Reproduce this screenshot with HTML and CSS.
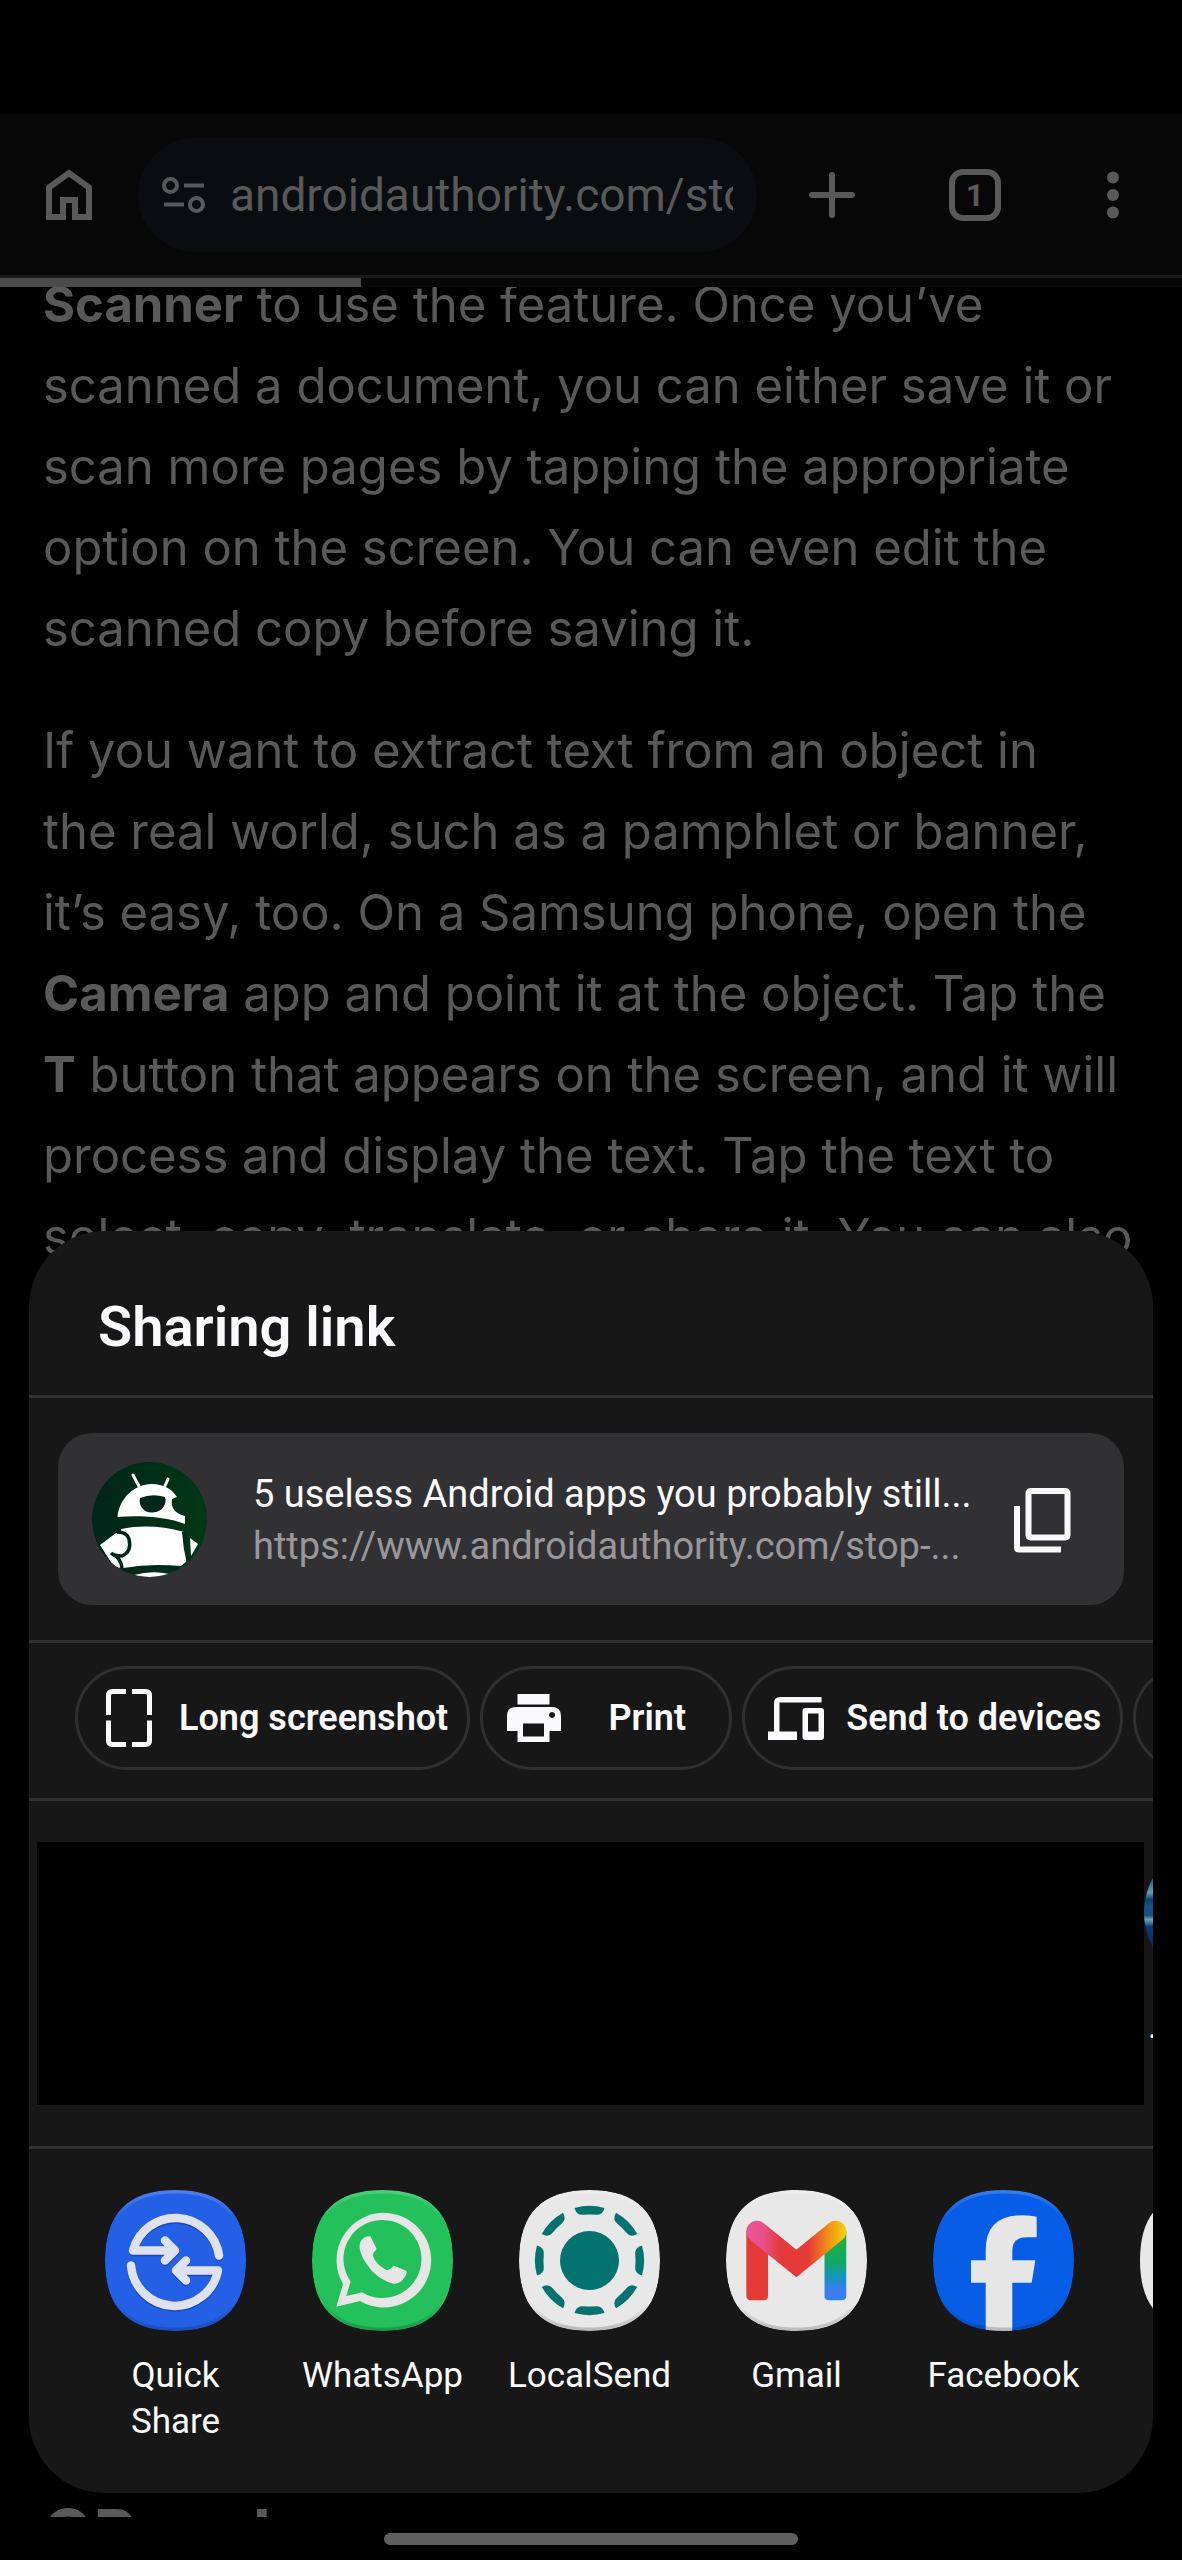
FILE: index.html
```
<!DOCTYPE html>
<html lang="en">
<head>
    <meta charset="UTF-8">
    <meta name="viewport" content="width=device-width, initial-scale=1.0">
    <title>Sharing link</title>
    <link rel="stylesheet" href="styles.css">
</head>
<body>
    <header class="toolbar">
        <button class="tool" aria-label="Home">
            <svg width="46" height="51" viewBox="0 0 46 51" fill="none" stroke="currentColor" stroke-width="6"><path d="M3 48V18.500L23 4l20 14.500V48H29V31H17V48Z"/></svg>
        </button>
        <div class="url-bar">
            <svg width="44" height="36" viewBox="0 0 44 36" fill="none" stroke="currentColor" stroke-width="4"><circle cx="8.500" cy="8.500" r="6.500"/><path d="M22 8.500h20M2 27.500h20"/><circle cx="34.500" cy="27.500" r="6.500"/></svg>
            <input type="text" class="url" aria-label="Address" value="androidauthority.com/stop">
        </div>
        <button class="tool new-tab" aria-label="New tab">
            <svg width="46" height="46" viewBox="0 0 46 46" stroke="currentColor" stroke-width="6" stroke-linecap="round"><path d="M23 3v40M3 23h40"/></svg>
        </button>
        <button class="tool" aria-label="Tabs"><span class="tab-count">1</span></button>
        <button class="tool" aria-label="Menu">
            <svg width="12" height="48" viewBox="0 0 12 48" fill="currentColor"><circle cx="6" cy="6.500" r="6"/><circle cx="6" cy="24" r="6"/><circle cx="6" cy="41.500" r="6"/></svg>
        </button>
    </header>
    <div class="load-track"><div class="load-bar"></div></div>

    <main class="article">
        <p><b>Scanner</b> to use the feature. Once you’ve scanned a document, you can either save it or scan more pages by tapping the appropriate option on the screen. You can even edit the scanned copy before saving it.</p>
        <p>If you want to extract text from an object in<br>the real world, such as a pamphlet or banner,<br>it’s easy, too. On a Samsung phone, open the <b>Camera</b> app and point it at the object. Tap the <b>T</b> button that appears on the screen, and it will process and display the text. Tap the text to<br>select, copy, translate, or share it. You can also</p>
        <h2>QR code</h2>
    </main>
    <div class="nav-bar"><div class="handle"></div></div>

    <section class="sheet">
        <h1>Sharing link</h1>

        <div class="row link-row">
            <div class="link-card">
                <svg class="avatar" viewBox="0 0 115 115">
                    <defs>
                        <linearGradient id="green"><stop offset="0" stop-color="#00241a"/><stop offset="1" stop-color="#003814"/></linearGradient>
                        <clipPath id="round"><circle cx="57.500" cy="57.500" r="57.500"/></clipPath>
                    </defs>
                    <g clip-path="url(#round)">
                        <rect width="115" height="115" fill="url(#green)"/>
                        <path d="M41 13l7 13M76 17l-4 9" stroke="#fff" stroke-width="3" stroke-linecap="round"/>
                        <path d="M25.500 55C27 37 42 22 60 22c11 0 20 5 25 13l-5 2c-1 7 1 14 13 17v8C76 55 48 53 25.500 55Z" fill="#fff"/>
                        <path d="M48 36q12-5 25-1 2 6-3 12-8 6-17 2-7-6-5-13Z" fill="#00261a"/>
                        <path d="M29 67q30-6 63 3 0 18 4 28l-7 6q-30-3-58 2-6-20-2-39Z" fill="#fff"/>
                        <path d="M98 76l8 6-7 12Z" fill="#fff"/>
                        <path d="M92 70q1 16 5 32" fill="none" stroke="#00301a" stroke-width="4"/>
                        <path d="M8 83l16-12q9 0 12 6 3 9-4 16l-2 13-8-1Z" fill="#fff"/>
                        <path d="M25 70q10 0 12 7 3 13-7 17-8 0-11-3M20 92q9 4 10 14" fill="none" stroke="#00281a" stroke-width="3.500"/>
                        <path d="M30 109q30-6 60-1" fill="none" stroke="#00281a" stroke-width="4"/>
                        <path d="M42 113q18-5 35-1l-8 3H48Z" fill="#fff"/>
                    </g>
                </svg>
                <div class="link-text">
                    <div class="link-title">5 useless Android apps you probably still...</div>
                    <div class="link-url">https://www.androidauthority.com/stop-...</div>
                </div>
                <button class="copy" aria-label="Copy link">
                    <svg width="57" height="65" viewBox="0 0 57 65" fill="none" stroke="currentColor" stroke-width="6"><rect x="14.500" y="3" width="39" height="46.500" rx="2"/><path d="M3 18v41.500q0 2 2 2h42"/></svg>
                </button>
            </div>
        </div>

        <div class="row chips">
            <button class="chip">
                <span class="chip-icon"><svg width="46" height="58" viewBox="0 0 46 58" fill="none" stroke="currentColor" stroke-width="5"><path d="M2.500 26V6.500q0-4 4-4H20M26 2.500h13.500q4 0 4 4V26M43.500 31.500v20q0 4-4 4H26M20 55.500H6.500q-4 0-4-4v-20"/></svg></span>
                <span class="chip-label">Long screenshot</span>
            </button>
            <button class="chip">
                <span class="chip-icon"><svg width="54" height="48" viewBox="0 0 54 48" fill="currentColor" fill-rule="evenodd"><path d="M10.500 0h32v10.500h-32ZM9 13h36q9 0 9 9v15H42.500v11h-32V37H0V22q0-9 9-9ZM16 29.500v13h21v-13ZM45 18a3 3 0 1 0 .1 0Z"/></svg></span>
                <span class="chip-label">Print</span>
            </button>
            <button class="chip">
                <span class="chip-icon"><svg width="56" height="43" viewBox="0 0 56 43" fill="currentColor" fill-rule="evenodd"><path d="M0 34.500h6V6q0-6 6-6h41.500v5.500H11.500v29H29V43H0ZM37.500 11H53q3 0 3 3v26q0 3-3 3H37.500q-3 0-3-3V14q0-3 3-3ZM40 16.500v18h10.500v-18Z"/></svg></span>
                <span class="chip-label">Send to devices</span>
            </button>
            <button class="chip" aria-label="More"><span class="chip-icon"></span></button>
        </div>

        <div class="row contacts">
            <div class="redacted"></div>
            <div class="contact">
                <div class="contact-photo"></div>
                <div class="contact-name">.</div>
            </div>
        </div>

        <div class="apps">
            <!-- shared icon shape and its edge shading -->
            <svg class="defs" width="0" height="0">
                <defs>
                    <path id="tile" d="M70.500 0C118 0 141 23 141 70.500S118 141 70.500 141 0 118 0 70.500 23 0 70.500 0Z"/>
                    <clipPath id="tile-clip"><use href="#tile"/></clipPath>
                    <linearGradient id="edge" x1="0" y1="0" x2="0" y2="1">
                        <stop offset="0" stop-color="#fff" stop-opacity=".2"/>
                        <stop offset=".2" stop-color="#fff" stop-opacity="0"/>
                        <stop offset=".8" stop-color="#000" stop-opacity="0"/>
                        <stop offset="1" stop-color="#000" stop-opacity=".2"/>
                    </linearGradient>
                    <linearGradient id="m-top" gradientUnits="userSpaceOnUse" x1="24" y1="0" x2="118" y2="0">
                        <stop offset="0" stop-color="#e8559a"/>
                        <stop offset=".14" stop-color="#e8508a"/>
                        <stop offset=".32" stop-color="#e53b38"/>
                        <stop offset=".62" stop-color="#e53b38"/>
                        <stop offset=".82" stop-color="#ef8a1c"/>
                        <stop offset="1" stop-color="#f3cd05"/>
                    </linearGradient>
                    <linearGradient id="m-right" x1="0" y1="0" x2="0" y2="1">
                        <stop offset=".2" stop-color="#1cae4c"/>
                        <stop offset=".45" stop-color="#12a867"/>
                        <stop offset=".65" stop-color="#1397b8"/>
                        <stop offset=".85" stop-color="#3a7df0"/>
                    </linearGradient>
                </defs>
            </svg>
            <a class="app" href="#">
                <svg class="app-icon" viewBox="0 0 141 141">
                    <g clip-path="url(#tile-clip)">
                        <use href="#tile" fill="#2460e6"/>
                        <g fill="none" stroke-width="8.500" stroke-linecap="round" stroke-linejoin="round">
                            <path d="M69 62H28A44 44 0 0 1 114 67M60 52l10 10-10 10M72 82h41A44 44 0 0 1 26 77M81 72 71 82l10 10" stroke="#1a49b8"/>
                            <path d="M69 60.500H28A44 44 0 0 1 114 65.500M60 50.500l10 10-10 10M72 80.500h41A44 44 0 0 1 26 75.500M81 70.500l-10 10 10 10" stroke="#dfe1ee"/>
                        </g>
                        <use href="#tile" fill="none" stroke="url(#edge)" stroke-width="7"/>
                    </g>
                </svg>
                <span class="app-name">Quick Share</span>
            </a>
            <a class="app" href="#">
                <svg class="app-icon" viewBox="0 0 141 141">
                    <g clip-path="url(#tile-clip)">
                        <use href="#tile" fill="#23c05c"/>
                        <path fill="#e6e6e6" fill-rule="evenodd" d="M24.300 116.700 31 94A47.300 47.300 0 1 1 48 111ZM34.300 106 50 102.200A39 39 0 1 0 38.600 91.500Z"/>
                        <path fill="#e6e6e6" d="M58.500 46.500 64.700 59q-4 4-4 6.500Q64 75 75 80.300q3.500-.5 6.700-4.800L94.500 81q1 3-4 9-4 4-9 3.700Q70 91 60 81 48 67 47.500 57q0-6 4-9 3.500-2.500 7-1.500Z"/>
                        <use href="#tile" fill="none" stroke="url(#edge)" stroke-width="7"/>
                    </g>
                </svg>
                <span class="app-name">WhatsApp</span>
            </a>
            <a class="app" href="#">
                <svg class="app-icon" viewBox="0 0 141 141">
                    <g clip-path="url(#tile-clip)">
                        <use href="#tile" fill="#e8e8e8"/>
                        <g fill="#04736f">
                            <circle cx="70.500" cy="70.500" r="29.500"/>
                            <path id="dash" d="M55.500 18A54.700 54.700 0 0 1 85.500 18Q83.500 25.500 77 24.800q-6.500-.6-13 0Q57.500 25.500 55.500 18Z"/>
                            <use href="#dash" transform="rotate(45 70.500 70.500)"/>
                            <use href="#dash" transform="rotate(90 70.500 70.500)"/>
                            <use href="#dash" transform="rotate(135 70.500 70.500)"/>
                            <use href="#dash" transform="rotate(180 70.500 70.500)"/>
                            <use href="#dash" transform="rotate(225 70.500 70.500)"/>
                            <use href="#dash" transform="rotate(270 70.500 70.500)"/>
                            <use href="#dash" transform="rotate(315 70.500 70.500)"/>
                        </g>
                        <use href="#tile" fill="none" stroke="url(#edge)" stroke-width="7"/>
                    </g>
                </svg>
                <span class="app-name">LocalSend</span>
            </a>
            <a class="app" href="#">
                <svg class="app-icon" viewBox="0 0 141 141">
                    <g clip-path="url(#tile-clip)">
                        <use href="#tile" fill="#e8e8e8"/>
                        <path fill="#e53b38" d="M20.300 41H42v65q0 4.300-4.300 4.300h-13q-4.400 0-4.400-5Z"/>
                        <path fill="url(#m-right)" d="M98.500 41h21.800v64.500q0 4.800-4.400 4.800h-13q-4.400 0-4.400-4.300Z"/>
                        <path fill="none" stroke="url(#m-top)" stroke-width="21.500" stroke-linecap="round" d="M31 41.500 70.400 73.500l39.200-32"/>
                        <use href="#tile" fill="none" stroke="url(#edge)" stroke-width="7"/>
                    </g>
                </svg>
                <span class="app-name">Gmail</span>
            </a>
            <a class="app" href="#">
                <svg class="app-icon" viewBox="0 0 141 141">
                    <g clip-path="url(#tile-clip)">
                        <use href="#tile" fill="#075de6"/>
                        <path fill="#e6e6e6" d="M52.700 141V92.700H38V70.300h14.700V60Q52.700 25 90 25.200q8 0 13.700 1.500V47.200H95Q79.300 46.500 79.300 61v9.300h23l-3.600 22.400H79.300V141Z"/>
                        <use href="#tile" fill="none" stroke="url(#edge)" stroke-width="7"/>
                    </g>
                </svg>
                <span class="app-name">Facebook</span>
            </a>
            <a class="app" href="#" aria-label="More apps">
                <svg class="app-icon" viewBox="0 0 141 141"><use href="#tile" fill="#e8e8e8"/></svg>
            </a>
        </div>
    </section>
</body>
</html>
```
FILE: styles.css
```
* {
    box-sizing: border-box;
}
body {
    margin: 0;
    height: 100vh;
    display: flex;
    flex-direction: column;
    position: relative;
    overflow: hidden;
    padding-top: 114px;
    background-color: #000;
    color: #595959;
    font-family: Roboto, sans-serif;
}
button {
    font: inherit;
    color: inherit;
    background: none;
    border: none;
    padding: 0;
}
svg {
    display: block;
    flex: none;
}

/* browser toolbar */
.toolbar {
    display: flex;
    align-items: center;
    height: 164px;
    flex: none;
    background-color: #070707;
    border-bottom: 3px solid #1a1a1a;
}
.tool {
    width: 138px;
    height: 100%;
    flex: none;
    display: flex;
    align-items: center;
    justify-content: center;
}
.new-tab {
    width: 149px;
}
.url-bar {
    flex: 1;
    min-width: 0;
    height: 114px;
    display: flex;
    align-items: center;
    gap: 24px;
    padding: 0 24px;
    border-radius: 57px;
    background-color: #0a0c10;
}
.url {
    flex: 1;
    min-width: 0;
    padding: 0;
    border: none;
    outline: none;
    background: none;
    color: #595959;
    font-family: Roboto, sans-serif;
    font-size: 46px;
}
.tab-count {
    width: 52px;
    height: 52px;
    border: 6px solid #595959;
    border-radius: 14px;
    font-size: 32px;
    font-weight: 700;
    line-height: 40px;
    text-align: center;
}
.load-track {
    height: 9px;
    flex: none;
    background-color: #070707;
}
.load-bar {
    width: 30.5%;
    height: 100%;
    background-color: #4b4b4b;
}

/* page behind the sheet */
.article {
    flex: 1;
    min-height: 0;
    display: flex;
    flex-direction: column;
    overflow: hidden;
    padding: 0 40px 0 43px;
    font-family: Inter, sans-serif;
    font-size: 49px;
    line-height: 81px;
}
.article p {
    margin: 0 0 41px;
}
.article p:first-child {
    margin-top: -23px;
}
.article h2 {
    margin: auto 0 -56px;
    font-size: 65px;
    line-height: 80px;
}
.nav-bar {
    height: 43px;
    flex: none;
    display: flex;
    justify-content: center;
    padding-top: 16px;
}
.handle {
    width: 35%;
    height: 12px;
    border-radius: 6px;
    background-color: #5e5e5e;
}

/* share sheet */
.sheet {
    position: absolute;
    left: 29px;
    right: 29px;
    bottom: 67px;
    overflow: hidden;
    border-radius: 76px;
    background-color: #171717;
    color: #fafafc;
}
.sheet h1 {
    margin: 0;
    padding: 64px 69px 36px;
    border-bottom: 3px solid #303030;
    font-size: 56px;
    font-weight: 600;
    line-height: 64px;
}
.row {
    border-bottom: 3px solid #303030;
}
.link-row {
    padding: 35px 29px;
}
.link-card {
    display: flex;
    align-items: center;
    padding: 35px 53px 33px 34px;
    border-radius: 34px;
    background-color: #313133;
}
.avatar {
    width: 115px;
    height: 115px;
    margin: -8px 0 -6px;
}
.link-text {
    flex: 1;
    min-width: 0;
    margin-left: 46px;
    font-size: 38px;
    line-height: 52px;
    white-space: nowrap;
}
.link-url {
    color: #98989c;
}
.chips {
    display: flex;
    gap: 10px;
    padding: 23px 0 28px 46px;
    overflow: hidden;
}
.chip {
    flex: none;
    height: 104px;
    display: flex;
    align-items: center;
    gap: 20px;
    padding: 0 19px 0 21px;
    border: 3px solid #303030;
    border-radius: 52px;
    font-size: 36px;
    font-weight: 600;
}
.chip-icon {
    width: 60px;
    display: flex;
    justify-content: center;
}
.chip-label {
    min-width: 126px;
    text-align: center;
}
.contacts {
    display: flex;
    align-items: flex-start;
    padding: 41px 0 41px 8px;
    overflow: hidden;
}
.redacted {
    flex: none;
    width: calc(100% - 9px);
    height: 263px;
    background-color: #000;
}
.contact {
    flex: none;
    width: 141px;
}
.contact-photo {
    height: 141px;
    border-radius: 50%;
    background: linear-gradient(#2c6f8c 28%, #5fa0ac 36%, #0c3c74 41%, #1a5288 46%, #16507e 52%, #6ea3b4 55%, #0a3a7c 60%, #0a2a66 75%);
}
.contact-name {
    margin-top: 21px;
    padding-left: 4px;
    font-size: 35px;
    line-height: 46px;
}
.apps {
    display: flex;
    padding: 41px 0 48px 43px;
}
.defs {
    position: absolute;
}
.app {
    flex: none;
    width: 207px;
    padding: 0 20px;
    display: flex;
    flex-direction: column;
    align-items: center;
    color: inherit;
    text-decoration: none;
}
.app-icon {
    width: 141px;
    height: 141px;
}
.app-name {
    margin-top: 22px;
    font-size: 35px;
    line-height: 46px;
    text-align: center;
}
```
